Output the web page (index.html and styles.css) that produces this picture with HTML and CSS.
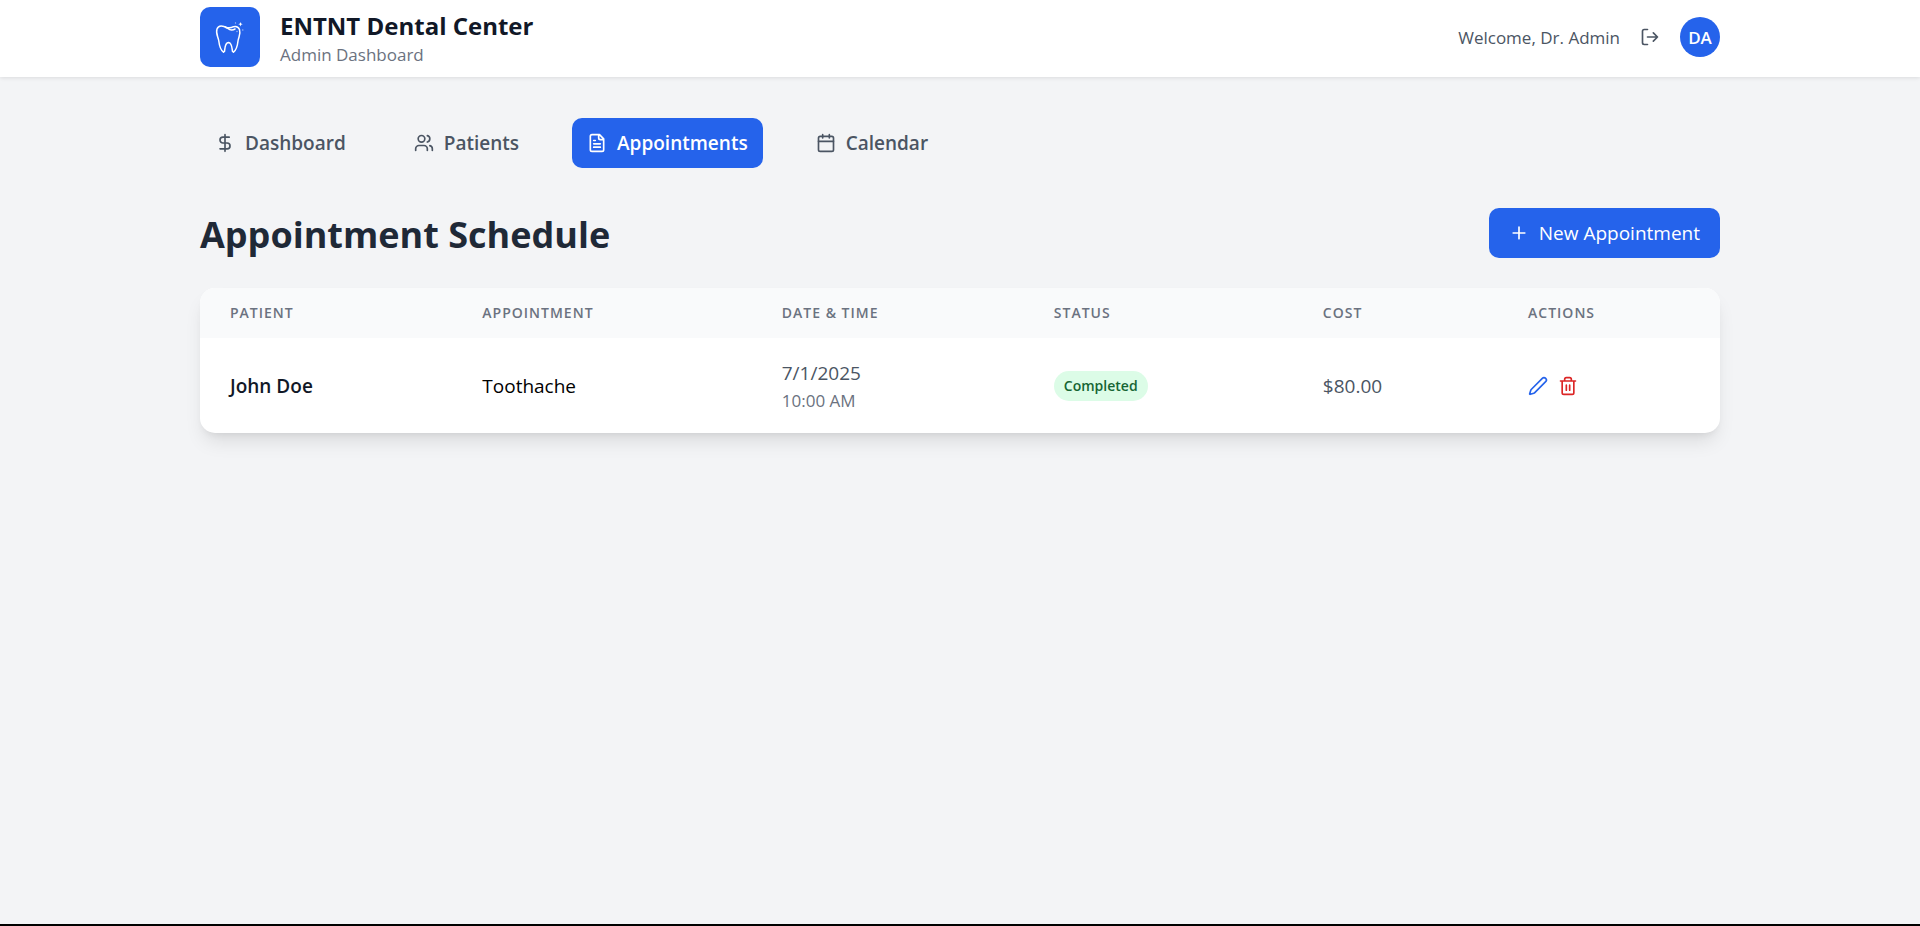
FILE: index.html
```html
<!DOCTYPE html>
<html lang="en">
<head>
<meta charset="utf-8">
<title>ENTNT Dental Center</title>
<link rel="stylesheet" href="styles.css">
</head>
<body>
<header class="topbar">
  <div class="container topbar-row">
    <div class="brand">
      <svg class="logo" viewBox="0 0 60 60" role="img" aria-label="Tooth">
        <path class="tooth" d="M27 21.200C23 18.500 18.500 18 17 22C15.400 26.500 18.300 30 18.800 34C19.300 38.500 20.500 43 23.500 45.200M24.500 44.500C25 41 24.800 35.800 28.500 35.500C32 35.800 32 41 32.500 44.500M33.500 45.200C36.500 43 37.500 38.500 38 34C38.500 30 41 27 39.500 22.500C38.500 20 36 19 33.500 19.700C31 21 28.500 21.500 25.500 19.800M27.500 21.200C30 23.300 33 23.200 35 22"/>
        <path class="spark" d="M40.500 15l.6 1.600 1.600.6-1.600.6-.6 1.600-.6-1.600-1.600-.6 1.600-.6z"/>
        <circle class="spark faint" cx="35.500" cy="16" r=".7"/>
        <circle class="spark faint" cx="42.800" cy="23" r=".7"/>
        <circle class="spark faint" cx="37" cy="24.500" r=".7"/>
      </svg>
      <div>
        <h1 class="brand-name">ENTNT Dental Center</h1>
        <p class="brand-sub">Admin Dashboard</p>
      </div>
    </div>
    <div class="user">
      <span class="welcome">Welcome, Dr. Admin</span>
      <button class="icon-btn" type="button" aria-label="Log out">
        <svg class="icon" viewBox="0 0 24 24"><path d="M9 21H5a2 2 0 0 1-2-2V5a2 2 0 0 1 2-2h4M16 17l5-5-5-5M21 12H9"/></svg>
      </button>
      <span class="avatar">DA</span>
    </div>
  </div>
</header>
<main class="container main">
  <nav class="tabs">
    <a class="tab" href="#dashboard"><svg class="icon" viewBox="0 0 24 24"><path d="M12 2v20M17 5H9.500a3.500 3.500 0 0 0 0 7h5a3.500 3.500 0 0 1 0 7H6"/></svg>Dashboard</a>
    <a class="tab" href="#patients"><svg class="icon" viewBox="0 0 24 24"><path d="M16 21v-2a4 4 0 0 0-4-4H6a4 4 0 0 0-4 4v2M22 21v-2a4 4 0 0 0-3-3.870M16 3.130a4 4 0 0 1 0 7.750"/><circle cx="9" cy="7" r="4"/></svg>Patients</a>
    <a class="tab active" href="#appointments" aria-current="page"><svg class="icon" viewBox="0 0 24 24"><path d="M15 2H6a2 2 0 0 0-2 2v16a2 2 0 0 0 2 2h12a2 2 0 0 0 2-2V7zM14 2v4a2 2 0 0 0 2 2h4M10 9H8M16 13H8M16 17H8"/></svg>Appointments</a>
    <a class="tab" href="#calendar"><svg class="icon" viewBox="0 0 24 24"><path d="M8 2v4M16 2v4M3 10h18"/><rect x="3" y="4" width="18" height="18" rx="2"/></svg>Calendar</a>
  </nav>
  <div class="page-head">
    <h2 class="page-title">Appointment Schedule</h2>
    <button class="primary" type="button"><svg class="icon" viewBox="0 0 24 24"><path d="M5 12h14M12 5v14"/></svg>New Appointment</button>
  </div>
  <div class="card">
    <table class="schedule">
      <colgroup><col class="c-patient"><col class="c-appointment"><col class="c-date"><col class="c-status"><col class="c-cost"><col></colgroup>
      <thead>
        <tr><th scope="col">Patient</th><th scope="col">Appointment</th><th scope="col">Date &amp; Time</th><th scope="col">Status</th><th scope="col">Cost</th><th scope="col">Actions</th></tr>
      </thead>
      <tbody>
        <tr>
          <td class="patient">John Doe</td>
          <td class="treatment">Toothache</td>
          <td><div>7/1/2025</div><div class="time">10:00 AM</div></td>
          <td><span class="pill">Completed</span></td>
          <td>$80.00</td>
          <td>
            <div class="actions">
              <button class="icon-btn edit" type="button" aria-label="Edit"><svg class="icon" viewBox="0 0 24 24"><path d="M21.174 6.812a1 1 0 0 0-3.986-3.987L3.842 16.174a2 2 0 0 0-.5.83l-1.321 4.352a.5.5 0 0 0 .623.622l4.353-1.320a2 2 0 0 0 .83-.497z"/></svg></button>
              <button class="icon-btn delete" type="button" aria-label="Delete"><svg class="icon" viewBox="0 0 24 24"><path d="M3 6h18M19 6v14a2 2 0 0 1-2 2H7a2 2 0 0 1-2-2V6M8 6V4a2 2 0 0 1 2-2h4a2 2 0 0 1 2 2v2M10 11v6M14 11v6"/></svg></button>
            </div>
          </td>
        </tr>
      </tbody>
    </table>
  </div>
</main>
<footer class="base"></footer>
</body>
</html>
```
FILE: styles.css
```css
* { box-sizing: border-box; }
body {
  margin: 0;
  min-height: 100vh;
  display: flex;
  flex-direction: column;
  background: #f3f4f6;
  color: #000;
  font: 19px/30px "Open Sans", "Noto Sans", sans-serif;
}
h1, h2, p { margin: 0; }
button { border: 0; padding: 0; font: inherit; background: none; cursor: pointer; }
a { text-decoration: none; }
.container { width: 100%; max-width: 1600px; margin: 0 auto; padding: 0 40px; }
.icon {
  display: block;
  flex: none;
  width: 20px;
  height: 20px;
  fill: none;
  stroke: currentColor;
  stroke-width: 2;
  stroke-linecap: round;
  stroke-linejoin: round;
}
.topbar { background: #fff; box-shadow: 0 1px 4px rgba(0, 0, 0, .1); }
.topbar-row { display: flex; justify-content: space-between; align-items: center; padding-top: 7px; padding-bottom: 10px; }
.brand { display: flex; align-items: center; gap: 20px; }
.logo { width: 60px; height: 60px; border-radius: 10px; background: #2563eb; }
.tooth { fill: none; stroke: #fff; stroke-width: 1.5; stroke-linecap: round; stroke-linejoin: round; }
.spark { fill: #fff; }
.faint { opacity: .6; }
.brand-name { padding-top: 2px; font-size: 24px; line-height: 33px; font-weight: 700; color: #111827; }
.brand-sub { font-size: 17px; line-height: 25px; color: #6b7280; }
.user { display: flex; align-items: center; gap: 20px; color: #4b5563; }
.welcome { padding-top: 2px; font-size: 17px; }
.icon-btn { color: inherit; }
.avatar {
  display: flex;
  align-items: center;
  justify-content: center;
  width: 40px;
  height: 40px;
  padding-top: 1px;
  border-radius: 50%;
  background: #2563eb;
  color: #fff;
  font-size: 17px;
  font-weight: 600;
}
.main { flex: 1; padding-top: 41px; }
.tabs { display: flex; gap: 38px; margin-bottom: 40px; }
.tab {
  display: flex;
  align-items: center;
  gap: 10px;
  padding: 10px 15px;
  border-radius: 10px;
  font-weight: 600;
  color: #4b5563;
}
.tab.active { background: #2563eb; color: #fff; }
.page-head { display: flex; justify-content: space-between; align-items: center; margin-bottom: 30px; }
.page-title { padding-top: 4px; font-size: 36px; line-height: 46px; font-weight: 700; color: #1f2937; }
.primary {
  display: flex;
  align-items: center;
  gap: 10px;
  padding: 10px 20px;
  border-radius: 10px;
  background: #2563eb;
  color: #fff;
}
.card {
  overflow: hidden;
  border-radius: 15px;
  background: #fff;
  box-shadow: 0 12px 19px -4px rgba(0, 0, 0, .1), 0 5px 8px -5px rgba(0, 0, 0, .1);
}
.schedule { width: 100%; table-layout: fixed; border-collapse: collapse; text-align: left; color: #4b5563; }
.c-patient { width: 16.600%; }
.c-appointment { width: 19.700%; }
.c-date { width: 17.900%; }
.c-status { width: 17.700%; }
.c-cost { width: 13.500%; }
th {
  padding: 15px 30px;
  background: #f9fafb;
  color: #6b7280;
  font-size: 14px;
  line-height: 20px;
  font-weight: 600;
  letter-spacing: 1px;
  text-transform: uppercase;
}
td { padding: 20px 30px; vertical-align: middle; }
.patient { font-weight: 600; color: #111827; }
.treatment { color: #000; }
.time { font-size: 17px; line-height: 25px; color: #6b7280; }
.pill {
  display: inline-block;
  padding: 5px 10px;
  border-radius: 15px;
  background: #dcfce7;
  color: #166534;
  font-size: 14px;
  line-height: 20px;
  font-weight: 600;
  vertical-align: middle;
}
.actions { display: flex; gap: 10px; }
.edit { color: #2563eb; }
.delete { color: #dc2626; }
.base { height: 2px; background: #000; }
```
